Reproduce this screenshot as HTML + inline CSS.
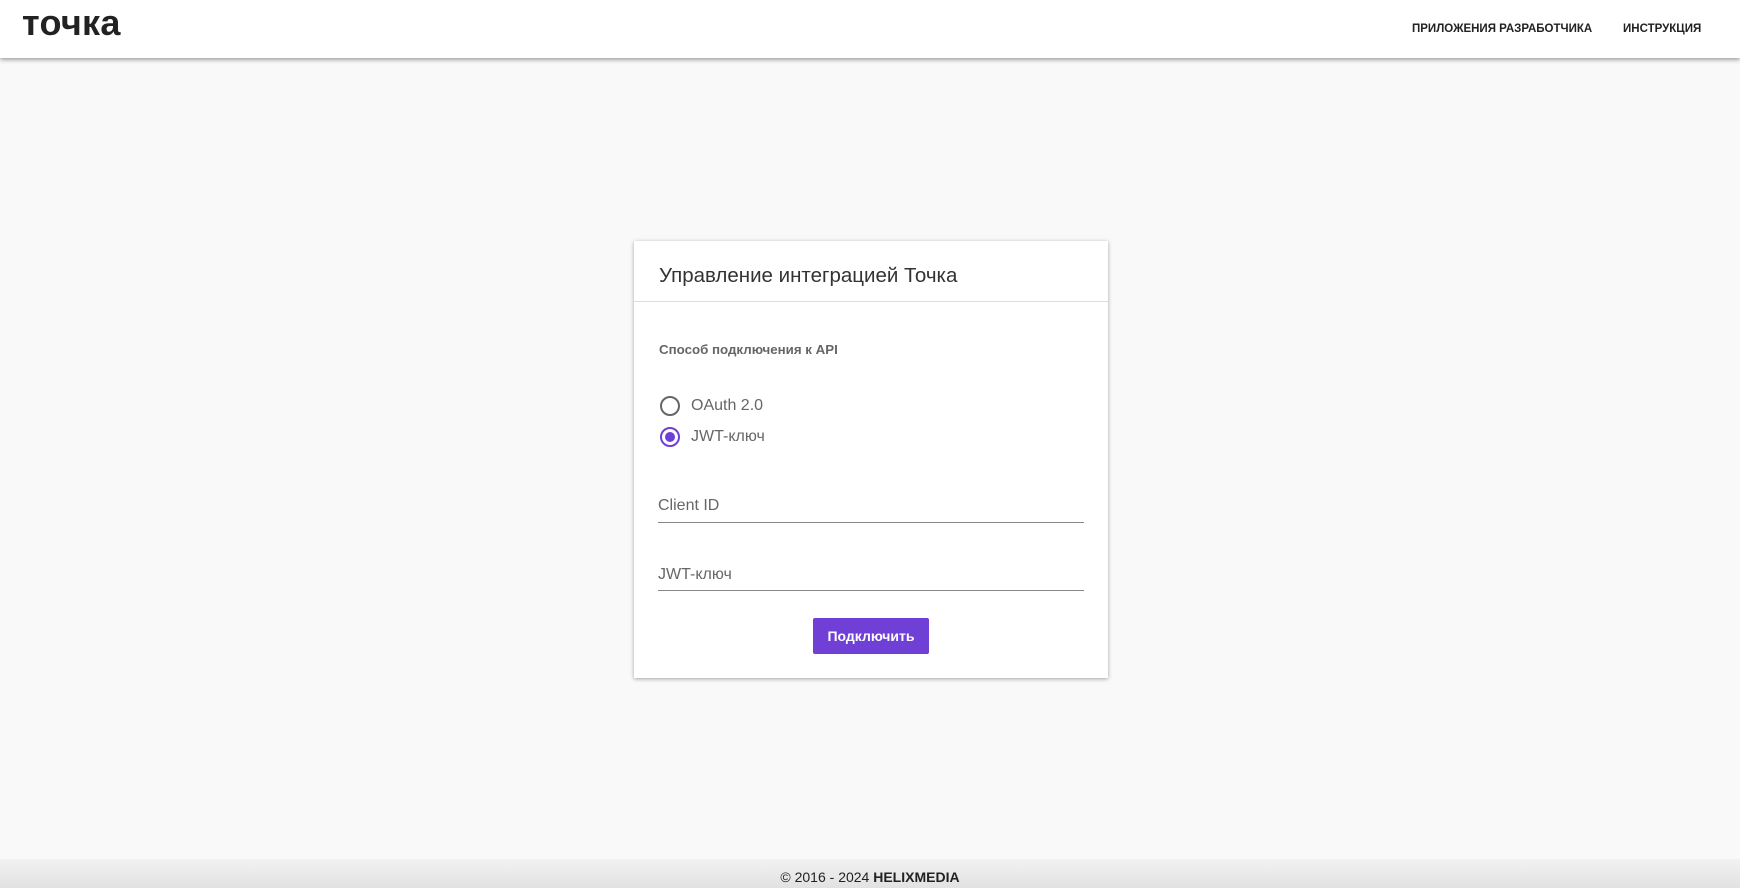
<!DOCTYPE html>
<html><head><meta charset="utf-8"><style>
*{margin:0;padding:0;box-sizing:border-box}
html,body{width:1740px;height:888px;overflow:hidden;background:#f9f9f9;font-family:"Liberation Sans",Arial,sans-serif;position:relative}
.hdr{position:absolute;left:0;top:0;width:1740px;height:58px;background:#fff;box-shadow:0 2px 4px rgba(0,0,0,.35)}
.logo{position:absolute;left:22px;top:5px;font-size:36px;line-height:1;font-weight:bold;color:#222;letter-spacing:0.3px}
.nav{position:absolute;top:23px;font-size:11.5px;font-weight:bold;color:#222;white-space:nowrap}
.card{position:absolute;left:634px;top:241px;width:474px;height:437px;background:#fff;box-shadow:0 1px 4px rgba(0,0,0,.35)}
.title{position:absolute;left:25px;top:23px;font-size:20.5px;color:#333;white-space:nowrap}
.div{position:absolute;left:0;top:60px;width:474px;height:1px;background:#ddd}
.lbl{position:absolute;left:25px;top:101px;font-size:13.3px;font-weight:bold;color:#666;white-space:nowrap}
.radio{position:absolute;left:26px;width:20px;height:20px;border:2px solid #666;border-radius:50%}
.radio.on{border-color:#6f3fd6}
.radio.on:after{content:"";position:absolute;left:3px;top:3px;width:10px;height:10px;border-radius:50%;background:#6f3fd6}
.rt{position:absolute;left:57px;font-size:16px;color:#666;white-space:nowrap}
.fld{position:absolute;left:24px;width:426px;border-bottom:1px solid #888;height:0}
.ft{position:absolute;left:24px;font-size:16px;color:#666}
.btn{position:absolute;left:179px;top:377px;width:116px;height:36px;background:#6f3fd6;border-radius:2px;color:#fff;font-size:14px;font-weight:bold;text-align:center;line-height:36px}
.foot{position:absolute;left:0;top:859px;width:1740px;height:29px;background:linear-gradient(#f2f2f2,#e2e2e2);text-align:center;font-size:14px;color:#222;line-height:36px}
</style></head><body>
<div class="hdr">
<div class="logo">точка</div>
<div class="nav" style="left:1412px">ПРИЛОЖЕНИЯ РАЗРАБОТЧИКА</div>
<div class="nav" style="left:1623px">ИНСТРУКЦИЯ</div>
</div>
<div class="card">
<div class="title">Управление интеграцией Точка</div>
<div class="div"></div>
<div class="lbl">Способ подключения к API</div>
<div class="radio" style="top:155px"></div><div class="rt" style="top:156px">OAuth 2.0</div>
<div class="radio on" style="top:186px"></div><div class="rt" style="top:187px">JWT-ключ</div>
<div class="ft" style="top:256px">Client ID</div><div class="fld" style="top:281px"></div>
<div class="ft" style="top:325px">JWT-ключ</div><div class="fld" style="top:349px"></div>
<div class="btn">Подключить</div>
</div>
<div class="foot">© 2016 - 2024 <b>HELIXMEDIA</b></div>
</body></html>
